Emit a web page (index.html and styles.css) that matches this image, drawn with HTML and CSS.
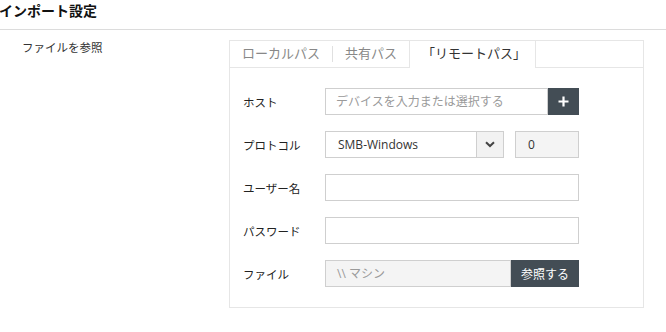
FILE: index.html
```html
<!DOCTYPE html>
<html lang="ja">
<head>
<meta charset="utf-8">
<link rel="stylesheet" href="styles.css">
</head>
<body>
<header class="title">インポート設定</header>
<div class="section">
  <div class="side-label">ファイルを参照</div>
  <div class="panel">
    <div class="tabs">
      <div class="tab-group">
        <div class="tab">ローカルパス</div>
        <span class="tab-sep"></span>
        <div class="tab">共有パス</div>
      </div>
      <div class="tab active">「リモートパス」</div>
      <div class="tab-fill"></div>
    </div>
    <div class="form">
      <div class="label">ホスト</div>
      <div class="field">
        <div class="input grow placeholder">デバイスを入力または選択する</div>
        <button class="btn-icon" type="button">
          <svg width="11" height="11" viewBox="0 0 11 11"><path d="M5.5 0.5v10M0.5 5.5h10" stroke="#fff" stroke-width="2.2"/></svg>
        </button>
      </div>

      <div class="label">プロトコル</div>
      <div class="field">
        <div class="select">
          <span class="select-text">SMB-Windows</span>
          <span class="select-arrow">
            <svg width="10" height="7" viewBox="0 0 10 7"><path d="M1 1.2l4 3.8 4-3.8" fill="none" stroke="#444" stroke-width="2"/></svg>
          </span>
        </div>
        <div class="input number">0</div>
      </div>

      <div class="label">ユーザー名</div>
      <div class="field"><div class="input grow"></div></div>

      <div class="label">パスワード</div>
      <div class="field"><div class="input grow"></div></div>

      <div class="label">ファイル</div>
      <div class="field">
        <div class="input grow disabled placeholder">\\ マシン</div>
        <button class="btn-dark" type="button">参照する</button>
      </div>
    </div>
  </div>
</div>
</body>
</html>
```
FILE: styles.css
```css
* { box-sizing: border-box; }
body {
  margin: 0;
  font-family: "Open Sans", "Noto Sans CJK JP", sans-serif;
  color: #333;
  background: #fff;
}
.title {
  height: 30px;
  line-height: 21px;
  font-size: 14px;
  font-weight: bold;
  color: #111;
  border-bottom: 1px solid #dcdcdc;
  padding-left: 0;
  margin-left: -1px;
}
.section {
  display: flex;
  padding-top: 10px;
}
.side-label {
  width: 229px;
  padding-left: 22px;
  padding-top: 0;
  font-size: 11.5px;
  line-height: 16px;
  color: #333;
}
.panel {
  width: 415px;
  border: 1px solid #e6e6e6;
}
.tabs {
  display: flex;
  height: 27px;
}
.tab-group {
  display: flex;
  align-items: center;
  border-bottom: 1px solid #e6e6e6;
}
.tab {
  height: 26px;
  line-height: 25px;
  padding: 0 12px;
  font-size: 13px;
  color: #888;
}
.tab-sep {
  width: 1px;
  height: 16px;
  background: #e0e0e0;
}
.tab.active {
  height: 27px;
  color: #333;
  border-left: 1px solid #e6e6e6;
  border-right: 1px solid #e6e6e6;
  padding: 0 9px 0 12px;
}
.tab-fill {
  flex: 1;
  border-bottom: 1px solid #e6e6e6;
}
.form {
  display: grid;
  grid-template-columns: 82px 254px;
  grid-auto-rows: 27px;
  row-gap: 16px;
  padding: 20px 0 20px 13px;
  align-items: center;
}
.label {
  font-size: 11.5px;
  color: #222;
}
.field {
  display: flex;
  height: 27px;
}
.input {
  height: 27px;
  border: 1px solid #cfcfcf;
  background: #fff;
  font-size: 12px;
  line-height: 25px;
  padding: 0 10px;
  color: #333;
}
.grow { flex: 1; }
.placeholder { color: #9a9a9a; }
.disabled { background: #f4f4f4; padding-left: 11px; }
.btn-icon {
  width: 31px;
  height: 27px;
  border: none;
  background: #434d55;
  display: flex;
  align-items: center;
  justify-content: center;
  padding: 0;
}
.btn-dark {
  width: 68px;
  height: 27px;
  border: none;
  background: #434d55;
  color: #fff;
  font-family: inherit;
  font-size: 12px;
  padding: 0;
}
.select {
  width: 179px;
  height: 27px;
  display: flex;
  border: 1px solid #cfcfcf;
  background: #fff;
}
.select-text {
  flex: 1;
  font-size: 12px;
  line-height: 25px;
  padding-left: 12px;
  color: #333;
}
.select-arrow {
  width: 27px;
  border-left: 1px solid #cfcfcf;
  background: #f2f2f2;
  display: flex;
  align-items: center;
  justify-content: center;
}
.number {
  width: 64px;
  margin-left: 11px;
  background: #f4f4f4;
  padding-left: 12px;
}
```
